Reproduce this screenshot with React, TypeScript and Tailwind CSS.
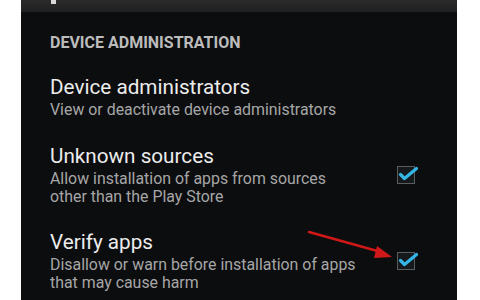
import React from "react";

function Check() {
  return (
    <div className="relative w-[18px] h-[18px] shrink-0">
      <div className="absolute inset-0 border border-[#5a5d60] bg-[#16191c]" />
      <svg className="absolute left-0 top-0 overflow-visible" width="18" height="18" viewBox="0 0 18 18">
        <path d="M3.5 8.5 L7.5 12.5 L19.5 2.5" fill="none" stroke="#33b5e5" strokeWidth="3.2" strokeLinecap="round" strokeLinejoin="round" />
      </svg>
    </div>
  );
}

export default function App() {
  return (
    <div className="w-[480px] h-[300px] bg-white flex overflow-hidden" style={{ fontFamily: "Roboto, 'Noto Sans', sans-serif" }}>
      <div className="relative ml-[21px] w-[436px] h-[300px] bg-[#0c0d0f] flex flex-col">
        <div className="relative h-[12px] bg-gradient-to-b from-[#2a2a2a] to-[#202020] shrink-0">
          <div className="absolute left-[30px] top-0 w-[5px] h-[4px] bg-[#d8d8d8]" />
        </div>
        <div className="pl-[29px] mt-[21px] text-[16px] leading-[20px] font-bold text-[#bcbcbc]">DEVICE ADMINISTRATION</div>
        <div className="ml-[19px] mr-[11px] mt-[5px] h-[2px] bg-[#4a4c4e]" />

        <div className="pl-[29px] pr-[42px] pt-[17px] pb-[12px]">
          <div className="text-[20.7px] leading-[24px] text-[#ececec]">Device administrators</div>
          <div className="mt-[2px] text-[15.9px] leading-[18px] text-[#a6a6a6]">View or deactivate device administrators</div>
        </div>
        <div className="ml-[19px] mr-[11px] h-[1px] bg-[#2c2e30]" />

        <div className="pl-[29px] pr-[42px] pt-[13px] pb-[12px] flex items-center">
          <div className="flex-1">
            <div className="text-[20.7px] leading-[24px] text-[#ececec]">Unknown sources</div>
            <div className="mt-[2px] text-[15.9px] leading-[18px] text-[#a6a6a6]">Allow installation of apps from sources<br />other than the Play Store</div>
          </div>
          <Check />
        </div>
        <div className="ml-[19px] mr-[11px] h-[1px] bg-[#2c2e30]" />

        <div className="pl-[29px] pr-[42px] pt-[12px] pb-[10px] flex items-center">
          <div className="flex-1">
            <div className="text-[20.7px] leading-[24px] text-[#ececec]">Verify apps</div>
            <div className="mt-[2px] text-[15.9px] leading-[18px] text-[#a6a6a6]">Disallow or warn before installation of apps<br />that may cause harm</div>
          </div>
          <Check />
        </div>

        <svg className="absolute left-0 top-0 pointer-events-none" width="436" height="300" viewBox="0 0 436 300">
          <line x1="288" y1="232" x2="360" y2="252" stroke="#d01818" strokeWidth="2.5" strokeLinecap="round" />
          <polygon points="371,257 356,246 353,258" fill="#d01818" />
        </svg>
      </div>
    </div>
  );
}
